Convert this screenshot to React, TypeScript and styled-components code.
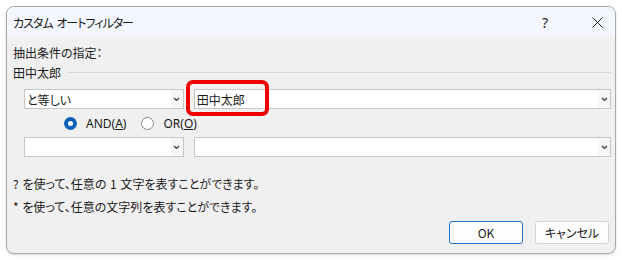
import React from "react";
import styled, { createGlobalStyle } from "styled-components";

const Global = createGlobalStyle`
  html, body { margin: 0; padding: 0; background: #ffffff; }
  body {
    font-family: "Noto Sans CJK JP", "Noto Sans", sans-serif;
    font-feature-settings: "palt";
    color: #1a1a1a;
  }
`;

const Page = styled.div`
  padding: 6px 0 0 6px;
  width: 622px;
  height: 260px;
  box-sizing: border-box;
`;

const Dialog = styled.div`
  position: relative;
  width: 610px;
  height: 248px;
  box-sizing: border-box;
  border: 1px solid #a9a9a9;
  border-radius: 8px;
  overflow: hidden;
  background: #f0f0f0;
  display: flex;
  flex-direction: column;
  box-shadow: 0 1px 3px rgba(0, 0, 0, 0.15);
`;

const TitleBar = styled.div`
  height: 30px;
  background: #f3f6fc;
  display: flex;
  align-items: center;
  padding-left: 6px;
  font-size: 12px;
  flex-shrink: 0;
`;

const Title = styled.div`
  flex: 1;
  letter-spacing: -1px;
  word-spacing: 2px;
`;

const TitleButton = styled.div<{ $w: number }>`
  width: ${(p) => p.$w}px;
  height: 30px;
  display: flex;
  align-items: center;
  justify-content: center;
  font-family: "Noto Sans", sans-serif;
  font-size: 14px;
  color: #222;
`;

const Body = styled.div`
  flex: 1;
  display: flex;
  flex-direction: column;
  padding: 0 4px 0 6px;
  font-size: 12px;
`;

const Label = styled.div`
  margin-top: 8px;
  height: 14px;
  display: flex;
  align-items: center;
`;

const GroupRow = styled.div`
  margin-top: 6px;
  height: 14px;
  display: flex;
  align-items: center;
  gap: 6px;
`;

const GroupLine = styled.div`
  flex: 1;
  height: 1px;
  background: #d7d7d7;
`;

const ComboRow = styled.div<{ $mt?: number }>`
  position: relative;
  margin-top: ${(p) => p.$mt ?? 0}px;
  display: flex;
  gap: 10px;
  padding-left: 11px;
  height: 20px;
`;

const Combo = styled.div<{ $w: number }>`
  width: ${(p) => p.$w}px;
  height: 20px;
  box-sizing: border-box;
  border: 1px solid #c6c6c6;
  background: #ffffff;
  display: flex;
  align-items: center;
  font-size: 12px;
`;

const ComboText = styled.div`
  flex: 1;
  padding-left: 2px;
  white-space: nowrap;
  overflow: hidden;
`;

const ComboArrow = styled.div`
  width: 12px;
  height: 18px;
  display: flex;
  align-items: center;
  justify-content: center;
  background: #f7f7f7;
`;

const Highlight = styled.div`
  position: absolute;
  left: 173px;
  top: -9px;
  width: 83px;
  height: 36px;
  box-sizing: border-box;
  border: 4px solid #ee0000;
  border-radius: 7px;
`;

const RadioRow = styled.div`
  height: 28px;
  display: flex;
  align-items: center;
  padding-left: 51px;
  gap: 15px;
  font-family: "Noto Sans", "Noto Sans CJK JP", sans-serif;
  font-size: 12px;
`;

const RadioItem = styled.label`
  display: flex;
  align-items: center;
  gap: 9px;
`;

const RadioCircle = styled.span<{ $on?: boolean }>`
  width: 13px;
  height: 13px;
  box-sizing: border-box;
  border-radius: 50%;
  display: inline-flex;
  align-items: center;
  justify-content: center;
  background: ${(p) => (p.$on ? "#0a62b8" : "#ffffff")};
  border: ${(p) => (p.$on ? "none" : "1px solid #8a8a8a")};
  &::after {
    content: "";
    display: ${(p) => (p.$on ? "block" : "none")};
    width: 5px;
    height: 5px;
    border-radius: 50%;
    background: #ffffff;
  }
`;

const U = styled.span`
  text-decoration: underline;
`;

const Hints = styled.div`
  margin-top: 15px;
  display: flex;
  flex-direction: column;
`;

const Hint = styled.div`
  height: 23px;
  display: flex;
  align-items: center;
  white-space: pre;
  word-spacing: 1px;
`;

const Buttons = styled.div`
  margin-top: 3px;
  display: flex;
  justify-content: flex-end;
  gap: 12px;
  padding-right: 2px;
`;

const Button = styled.div<{ $primary?: boolean }>`
  width: 74px;
  height: 23px;
  box-sizing: border-box;
  border: 1px solid ${(p) => (p.$primary ? "#1a73c8" : "#d3d3d3")};
  border-radius: 3px;
  background: #fdfdfd;
  display: flex;
  align-items: center;
  justify-content: center;
  font-size: 12px;
`;

const Chevron = () => (
  <svg width="7" height="5" viewBox="0 0 7 5">
    <path d="M1 1 L3.5 3.5 L6 1" fill="none" stroke="#333" strokeWidth="1.2" />
  </svg>
);

const Close = () => (
  <svg width="11" height="11" viewBox="0 0 11 11">
    <path d="M0.5 0.5 L10.5 10.5 M10.5 0.5 L0.5 10.5" stroke="#222" strokeWidth="1" />
  </svg>
);

const ComboBox: React.FC<{ w: number; text?: string }> = ({ w, text }) => (
  <Combo $w={w}>
    <ComboText>{text}</ComboText>
    <ComboArrow>
      <Chevron />
    </ComboArrow>
  </Combo>
);

export default function App() {
  return (
    <>
      <Global />
      <Page>
        <Dialog>
          <TitleBar>
            <Title>カスタム オートフィルター</Title>
            <TitleButton $w={68}>?</TitleButton>
            <TitleButton $w={36}>
              <Close />
            </TitleButton>
          </TitleBar>
          <Body>
            <Label>抽出条件の指定：</Label>
            <GroupRow>
              <span>田中太郎</span>
              <GroupLine />
            </GroupRow>
            <ComboRow $mt={10}>
              <ComboBox w={160} text="と等しい" />
              <ComboBox w={418} text="田中太郎" />
              <Highlight />
            </ComboRow>
            <RadioRow>
              <RadioItem>
                <RadioCircle $on />
                <span>
                  AND(<U>A</U>)
                </span>
              </RadioItem>
              <RadioItem>
                <RadioCircle />
                <span>
                  OR(<U>O</U>)
                </span>
              </RadioItem>
            </RadioRow>
            <ComboRow>
              <ComboBox w={160} />
              <ComboBox w={418} />
            </ComboRow>
            <Hints>
              <Hint>? を使って、任意の 1 文字を表すことができます。</Hint>
              <Hint>* を使って、任意の文字列を表すことができます。</Hint>
            </Hints>
            <Buttons>
              <Button $primary>OK</Button>
              <Button>キャンセル</Button>
            </Buttons>
          </Body>
        </Dialog>
      </Page>
    </>
  );
}
